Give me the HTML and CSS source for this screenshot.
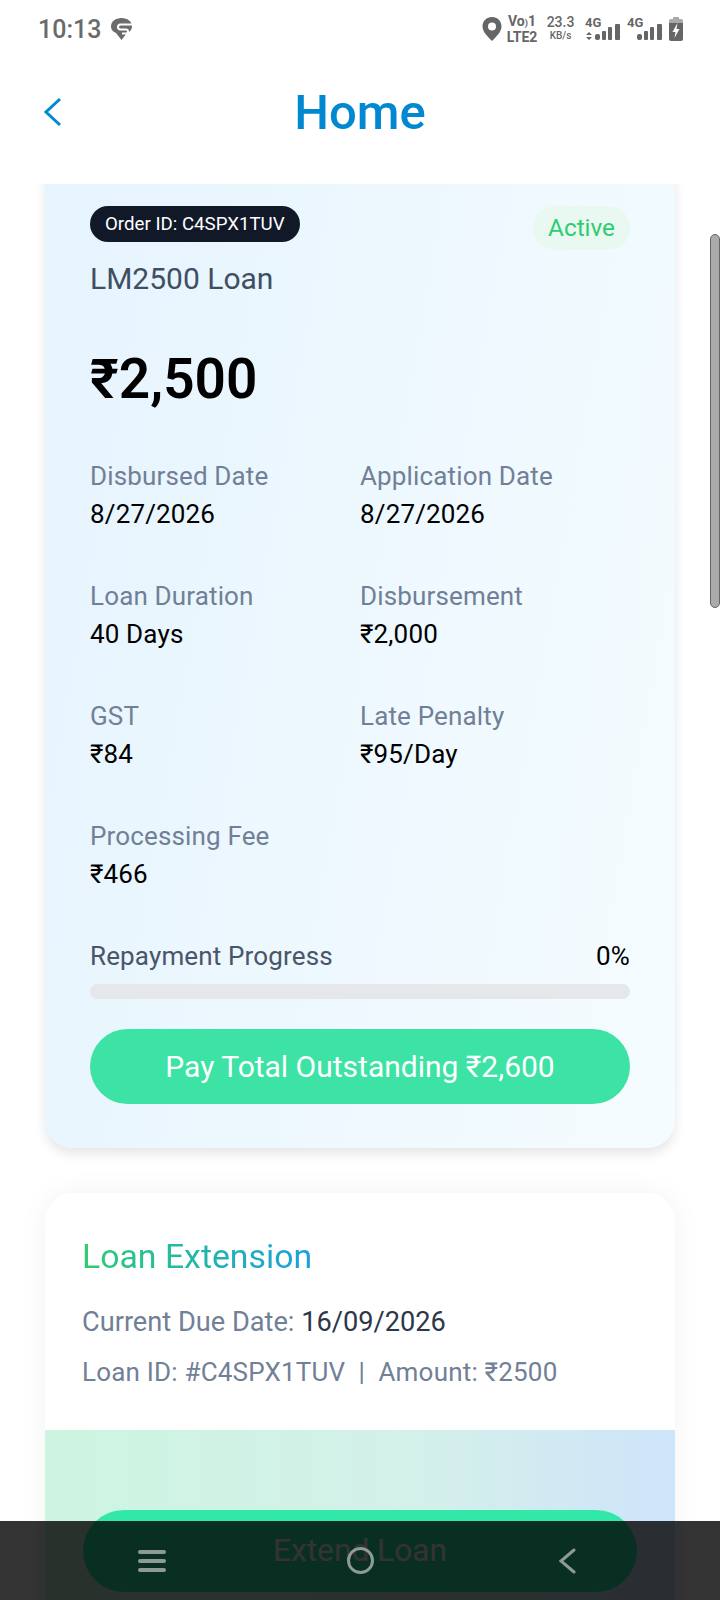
FILE: index.html
```html
<!DOCTYPE html>
<html>
<head>
    <title>Home</title>
    <link rel="stylesheet" href="styles.css">
</head>
<body>
    <div class="status-bar">
        <div class="status-left">
            <span class="clock">10:13</span>
            <svg class="status-pin" width="21" height="22" viewBox="0 0 21 22">
                <path d="M10.500 0C4.500 0 0 3.500 0 8.500c0 3.500 2.500 5.500 5 6.500l5.500 7 5.500-7c2.500-1 5-3 5-6.500C21 3.500 16.500 0 10.500 0z" fill="#6b6b6b"/>
                <path d="M21 6.500H9.500a2 2 0 0 0 0 5h5.500a2 2 0 0 1 0 4h-4" stroke="#fff" stroke-width="2" fill="none"/>
            </svg>
        </div>
        <div class="status-right">
            <svg class="loc-icon" width="20" height="24" viewBox="0 0 20 24">
                <path d="M10 0C4.500 0 .5 4 .5 9.500 .5 15 6 20 10 24c4-4 9.500-9 9.500-14.500C19.500 4 15.500 0 10 0z" fill="#666"/>
                <circle cx="10" cy="9.500" r="4" fill="#fff"/>
            </svg>
            <div class="stack net-volte"><span>Vo<small>)</small>1</span><span>LTE2</span></div>
            <div class="stack net-speed"><span class="speed-num">23.3</span><span class="speed-unit">KB/s</span></div>
            <div class="sim">
                <span class="sim-label">4G</span>
                <svg width="35" height="24" viewBox="0 0 35 24">
                    <path d="M3 9l3 3H0zM3 17l3-3H0z" transform="translate(1 6)" fill="#666"/>
                    <rect x="10" y="17" width="5" height="6" rx="2" fill="#666"/>
                    <rect x="17" y="14" width="4" height="9" rx="1" fill="#666"/>
                    <rect x="23" y="10" width="4" height="13" rx="1" fill="#666"/>
                    <rect x="30" y="7" width="5" height="16" rx="1" fill="#666"/>
                </svg>
            </div>
            <div class="sim">
                <span class="sim-label">4G</span>
                <svg width="35" height="24" viewBox="0 0 35 24">
                    <rect x="10" y="17" width="5" height="6" rx="2" fill="#666"/>
                    <rect x="17" y="14" width="4" height="9" rx="1" fill="#666"/>
                    <rect x="23" y="10" width="4" height="13" rx="1" fill="#666"/>
                    <rect x="30" y="7" width="5" height="16" rx="1" fill="#666"/>
                </svg>
            </div>
            <svg class="battery" width="14" height="24" viewBox="0 0 14 24">
                <path d="M4 0h6v2H4z" fill="#aaa"/>
                <path d="M2 2h10a2 2 0 0 1 2 2v2H0V4a2 2 0 0 1 2-2z" fill="#aaa"/>
                <path d="M0 6h14v16a2 2 0 0 1-2 2H2a2 2 0 0 1-2-2z" fill="#666"/>
                <path d="M8.500 6L3.500 15h3l-1 6 5-9h-3z" fill="#fff"/>
            </svg>
        </div>
    </div>

    <div class="top-bar">
        <svg class="back" width="20" height="30" viewBox="0 0 20 30">
            <path d="M17 2L3 15l14 13" stroke="#0288d1" stroke-width="3" fill="none"/>
        </svg>
        <h1>Home</h1>
    </div>

    <div class="content">
        <div class="card loan-card">
            <div class="loan-head">
                <div>
                    <div class="order-pill">Order ID: C4SPX1TUV</div>
                    <div class="loan-name">LM2500 Loan</div>
                </div>
                <div class="active-pill">Active</div>
            </div>
            <div class="amount">₹2,500</div>

            <div class="details">
                <div class="detail"><div class="detail-label">Disbursed Date</div><div class="detail-value">8/27/2026</div></div>
                <div class="detail"><div class="detail-label">Application Date</div><div class="detail-value">8/27/2026</div></div>
                <div class="detail"><div class="detail-label">Loan Duration</div><div class="detail-value">40 Days</div></div>
                <div class="detail"><div class="detail-label">Disbursement</div><div class="detail-value">₹2,000</div></div>
                <div class="detail"><div class="detail-label">GST</div><div class="detail-value">₹84</div></div>
                <div class="detail"><div class="detail-label">Late Penalty</div><div class="detail-value">₹95/Day</div></div>
                <div class="detail"><div class="detail-label">Processing Fee</div><div class="detail-value">₹466</div></div>
            </div>

            <div class="progress-head">
                <span class="progress-label">Repayment Progress</span>
                <span class="progress-num">0%</span>
            </div>
            <div class="progress-track"></div>
            <button class="pay-btn">Pay Total Outstanding ₹2,600</button>
        </div>

        <div class="card extension-card">
            <div class="extension-info">
                <div class="extension-title">Loan Extension</div>
                <div class="due-line">Current Due Date: <span class="due-date">16/09/2026</span></div>
                <div class="loan-line">Loan ID: #C4SPX1TUV &nbsp;|&nbsp; Amount: ₹2500</div>
            </div>
            <div class="extension-action">
                <button class="extend-btn">Extend Loan</button>
            </div>
        </div>
    </div>

    <div class="scroll-thumb"></div>

    <div class="nav-bar">
        <svg class="nav-menu" width="28" height="22" viewBox="0 0 28 22">
            <path d="M2 2h24M2 11h24M2 20h24" stroke="#8d9a95" stroke-width="4" stroke-linecap="round"/>
        </svg>
        <svg class="nav-home" width="27" height="27" viewBox="0 0 27 27">
            <circle cx="13.500" cy="13.500" r="12" stroke="#8d9a95" stroke-width="3" fill="none"/>
        </svg>
        <svg class="nav-back" width="18" height="26" viewBox="0 0 18 26">
            <path d="M16 2L3 13l13 11" stroke="#8d9a95" stroke-width="3" stroke-linecap="round" fill="none"/>
        </svg>
    </div>
</body>
</html>
```

FILE: styles.css
```css
html, body {
    height: 1600px;
}

body {
    margin: 0;
    display: flex;
    flex-direction: column;
    overflow: hidden;
    font-family: Roboto, Arial, sans-serif;
    background: #fff;
}

.status-bar {
    height: 60px;
    padding: 0 37px 2px 38px;
    box-sizing: border-box;
    display: flex;
    align-items: center;
    justify-content: space-between;
    color: #666;
}

.status-left {
    display: flex;
    align-items: center;
    gap: 10px;
}

.clock {
    font-size: 25px;
    font-weight: 500;
    color: #6b6b6b;
}

.status-right {
    display: flex;
    align-items: center;
}

.stack {
    display: flex;
    flex-direction: column;
    align-items: center;
    font-weight: 700;
    line-height: 14px;
}

.net-volte {
    width: 28px;
    margin-left: 6px;
    font-size: 14px;
}

.net-volte small {
    font-size: 9px;
}

.net-speed {
    width: 27px;
    margin-left: 11px;
}

.speed-num {
    font-size: 14px;
    font-weight: 500;
}

.speed-unit {
    font-size: 10px;
    font-weight: 500;
}

.sim {
    position: relative;
    margin-left: 11px;
}

.sim + .sim {
    margin-left: 7px;
}

.sim svg {
    display: block;
}

.sim-label {
    position: absolute;
    left: 0;
    top: -2px;
    font-size: 13px;
    font-weight: 700;
}

.battery {
    margin-left: 7px;
}

.top-bar {
    height: 124px;
    padding-bottom: 20px;
    box-sizing: border-box;
    position: relative;
    display: flex;
    align-items: center;
    justify-content: center;
}

.back {
    position: absolute;
    left: 43px;
    top: 37px;
}

h1 {
    margin: 0;
    font-size: 49px;
    font-weight: 500;
    color: #0288d1;
}

.content {
    flex: 1;
    overflow: hidden;
    padding: 0 45px;
}

.card {
    border-radius: 28px;
    box-shadow: 0 6px 12px rgba(0, 0, 0, 0.1);
}

.loan-card {
    margin-top: -28px;
    padding: 50px 45px 44px;
    background: linear-gradient(100deg, #e6f4fe, #f5fcff);
}

.loan-head {
    display: flex;
    justify-content: space-between;
    align-items: flex-start;
}

.order-pill {
    display: inline-block;
    height: 36px;
    line-height: 36px;
    padding: 0 15px;
    border-radius: 18px;
    background: #111827;
    color: #fff;
    font-size: 18.700px;
}

.loan-name {
    margin-top: 20px;
    font-size: 30px;
    line-height: 34px;
    color: #3f4f63;
}

.active-pill {
    height: 44px;
    line-height: 44px;
    padding: 0 15px;
    border-radius: 22px;
    background: #e9f8f1;
    color: #2ecc71;
    font-size: 24.300px;
}

.amount {
    margin-top: 50px;
    font-size: 55px;
    line-height: 66px;
    font-weight: 600;
    color: #000;
}

.details {
    margin-top: 47px;
    display: grid;
    grid-template-columns: 270px 1fr;
    row-gap: 48px;
}

.detail-label, .detail-value, .progress-head {
    font-size: 26px;
    line-height: 34px;
    letter-spacing: 0.15px;
}

.detail-label {
    color: #718096;
}

.detail-value {
    margin-top: 4px;
    color: #000;
}

.progress-head {
    margin-top: 48px;
    display: flex;
    justify-content: space-between;
}

.progress-label {
    color: #4a5568;
}

.progress-num {
    color: #000;
}

.progress-track {
    margin-top: 11px;
    height: 15px;
    border-radius: 8px;
    background: #e5e7eb;
}

.pay-btn {
    display: block;
    width: 100%;
    height: 75px;
    margin-top: 30px;
    border: 0;
    border-radius: 38px;
    background: #3ce3a5;
    color: #fff;
    font-family: inherit;
    font-size: 30px;
}

.extension-card {
    margin-top: 45px;
    background: #fff;
    overflow: hidden;
    box-shadow: 0 0 30px rgba(0, 0, 0, 0.05);
}

.extension-info {
    height: 237px;
    box-sizing: border-box;
    padding: 44px 37px 0;
}

.extension-title {
    font-size: 33.800px;
    line-height: 40px;
    background: linear-gradient(90deg, #2ecc71, #1a9fe0);
    background-clip: text;
    -webkit-background-clip: text;
    color: transparent;
    display: inline-block;
}

.due-line {
    margin-top: 28px;
    font-size: 27.200px;
    line-height: 34px;
    color: #718096;
}

.due-date {
    color: #2d3748;
}

.loan-line {
    margin-top: 16px;
    font-size: 26px;
    letter-spacing: 0.2px;
    line-height: 34px;
    color: #718096;
}

.extension-action {
    height: 300px;
    box-sizing: border-box;
    padding: 80px 38px 0;
    background: linear-gradient(90deg, #cdf5e1, #d4f0ea 60%, #cee4fa);
}

.extend-btn {
    display: block;
    width: 100%;
    height: 82px;
    border: 0;
    border-radius: 41px;
    background: #31e8a8;
    color: #fff;
    font-family: inherit;
    font-size: 31.700px;
    padding-bottom: 2px;
}

.scroll-thumb {
    position: absolute;
    left: 710px;
    top: 234px;
    width: 10px;
    height: 374px;
    box-sizing: border-box;
    border: 1px solid #666;
    border-radius: 5px;
    background: #aaa;
}

.nav-bar {
    position: absolute;
    left: 0;
    top: 1521px;
    width: 720px;
    height: 79px;
    box-sizing: border-box;
    padding: 0 138px;
    display: grid;
    grid-template-columns: 1fr auto 1fr;
    align-items: center;
    background: rgba(0, 0, 0, 0.8);
}

.nav-back {
    justify-self: end;
    margin-right: 6px;
}
```
